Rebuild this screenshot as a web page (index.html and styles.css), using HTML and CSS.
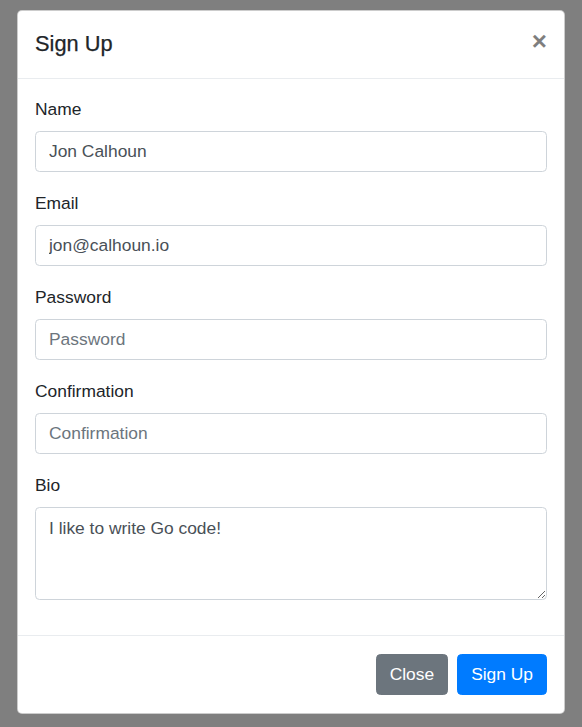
FILE: index.html
```html
<!DOCTYPE html>
<html>
<head>
<meta charset="utf-8">
<link rel="stylesheet" href="styles.css">
</head>
<body>
<div class="modal">
  <div class="modal-header">
    <h5 class="modal-title">Sign Up</h5>
    <button class="close" type="button">&times;</button>
  </div>
  <div class="modal-body">
    <div class="form-group">
      <label>Name</label>
      <input class="form-control" type="text" value="Jon Calhoun">
    </div>
    <div class="form-group">
      <label>Email</label>
      <input class="form-control" type="email" value="jon@calhoun.io">
    </div>
    <div class="form-group">
      <label>Password</label>
      <input class="form-control" type="password" placeholder="Password">
    </div>
    <div class="form-group">
      <label>Confirmation</label>
      <input class="form-control" type="password" placeholder="Confirmation">
    </div>
    <div class="form-group">
      <label>Bio</label>
      <textarea class="form-control textarea" rows="3">I like to write Go code!</textarea>
    </div>
  </div>
  <div class="modal-footer">
    <button class="btn btn-secondary" type="button">Close</button>
    <button class="btn btn-primary" type="button">Sign Up</button>
  </div>
</div>
</body>
</html>
```

FILE: styles.css
```css
* { box-sizing: border-box; }
html, body { margin: 0; padding: 0; }
body {
  background: #7f7f7f;
  font-family: "Liberation Sans", Arial, sans-serif;
  font-size: 17.4px;
  line-height: 1.5;
  color: #212529;
  padding: 10px 17px;
}
.modal {
  width: 548px;
  background: #fff;
  border: 1px solid rgba(0,0,0,.2);
  border-radius: 5px;
  display: flex;
  flex-direction: column;
}
.modal-header {
  display: flex;
  align-items: flex-start;
  justify-content: space-between;
  padding: 17px 17px;
  border-bottom: 1px solid #e9ecef;
}
.modal-title {
  margin: 0;
  font-size: 21.8px;
  font-weight: 500;
  line-height: 1.5;
  color: #212529;
  -webkit-text-stroke: 0.25px #212529;
}
.close {
  background: none;
  border: 0;
  padding: 17px;
  margin: -17px -17px -17px auto;
  font-family: "Liberation Sans", Arial, sans-serif;
  font-size: 26px;
  font-weight: 700;
  line-height: 1;
  color: #000;
  opacity: .5;
  text-shadow: 0 1px 0 #fff;
  cursor: pointer;
}
.modal-body {
  padding: 17px;
}
.form-group {
  margin-bottom: 17.5px;
  display: flex;
  flex-direction: column;
}
label {
  display: block;
  line-height: 26px;
  margin-bottom: 9.5px;
}
.form-control {
  display: block;
  width: 100%;
  height: 41px;
  padding: 6.5px 13px;
  font-family: "Liberation Sans", Arial, sans-serif;
  font-size: 17.4px;
  line-height: 1.5;
  color: #495057;
  background: #fff;
  border: 1px solid #ced4da;
  border-radius: 4.5px;
  outline: none;
}
.form-control::placeholder { color: #6c757d; opacity: 1; }
.textarea {
  height: 93px;
  resize: vertical;
}
.modal-footer {
  display: flex;
  justify-content: flex-end;
  align-items: center;
  gap: 9px;
  padding: 18px 17px 18px 17px;
  border-top: 1px solid #e9ecef;
}
.btn {
  height: 41px;
  padding: 6.5px 13px;
  font-family: "Liberation Sans", Arial, sans-serif;
  font-size: 17.4px;
  line-height: 1.5;
  color: #fff;
  border: 1px solid transparent;
  border-radius: 4.5px;
  cursor: pointer;
}
.btn-secondary { background: #6c757d; border-color: #6c757d; }
.btn-primary { background: #007bff; border-color: #007bff; }
```
